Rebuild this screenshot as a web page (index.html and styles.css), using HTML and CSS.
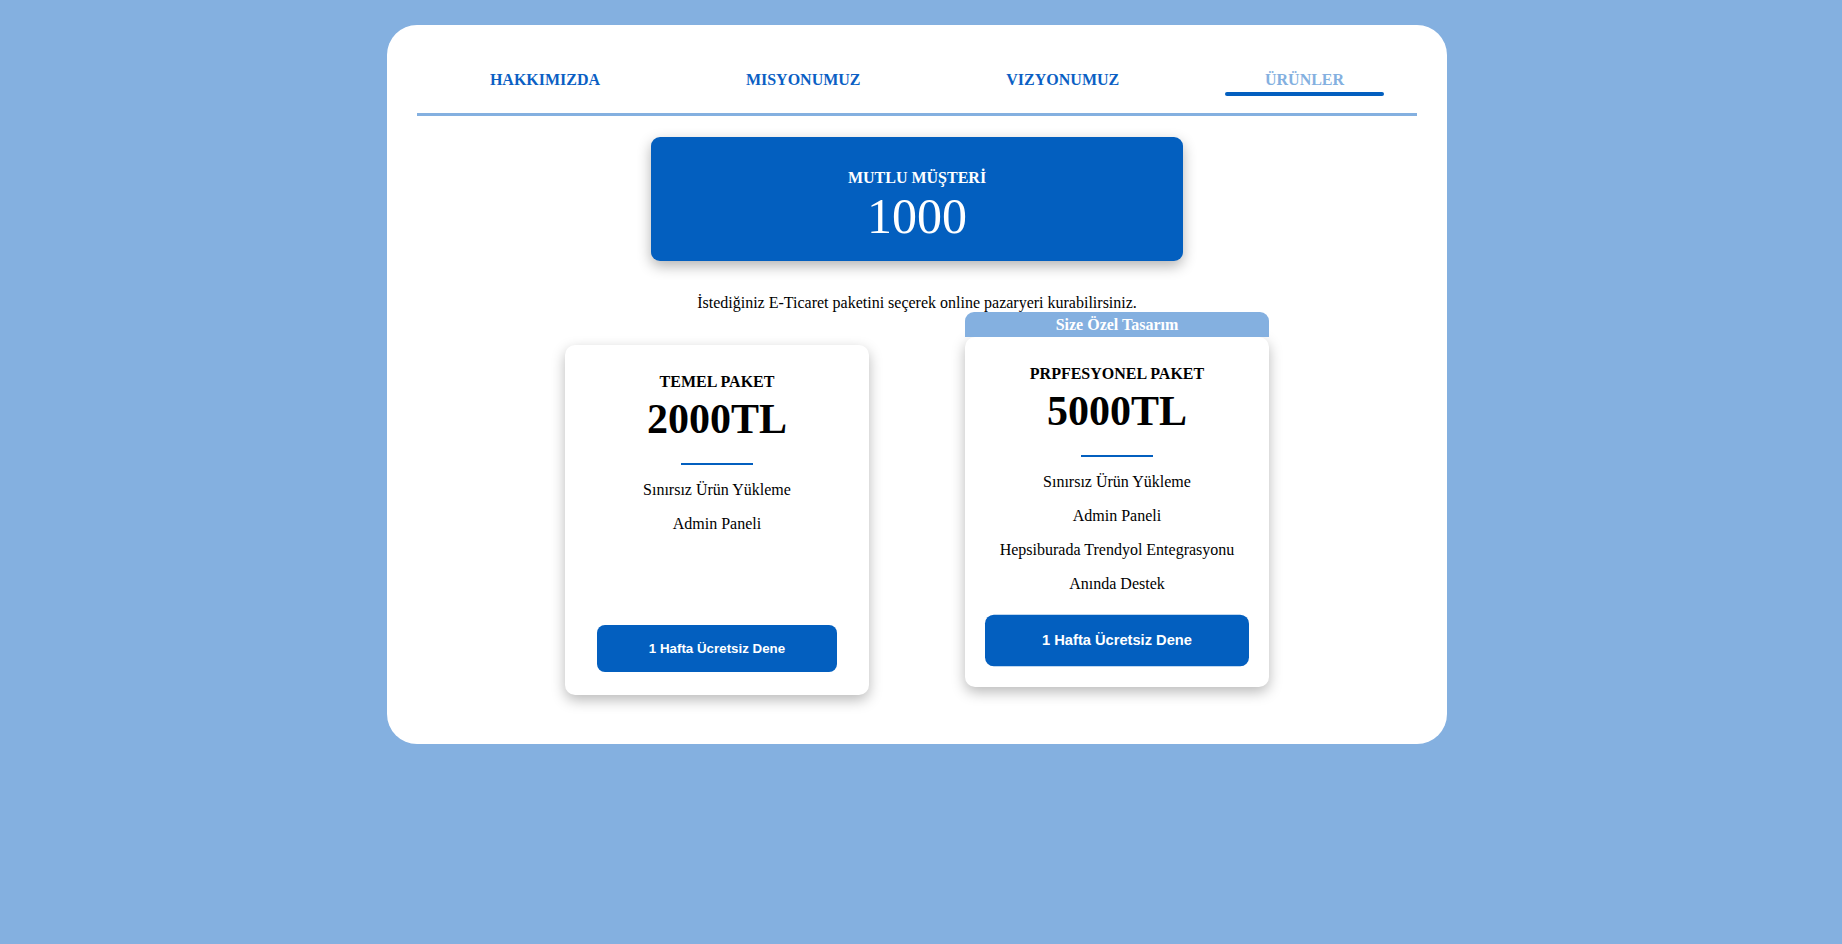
FILE: index.html
```html
<!DOCTYPE html>
<html lang="tr">
<head>
<meta charset="utf-8">
<title>Ürünler</title>
<link rel="stylesheet" href="styles.css">
</head>
<body>
<div class="page">
  <main class="panel">
    <nav class="tabs">
      <ul class="tab-list">
        <li class="tab"><span class="tab-text">HAKKIMIZDA</span></li>
        <li class="tab"><span class="tab-text">MISYONUMUZ</span></li>
        <li class="tab"><span class="tab-text">VIZYONUMUZ</span></li>
        <li class="tab active"><span class="tab-text">ÜRÜNLER</span><span class="tab-bar"></span></li>
      </ul>
    </nav>

    <section class="stat">
      <h3 class="stat-label">MUTLU MÜŞTERİ</h3>
      <div class="stat-value">1000</div>
    </section>

    <p class="intro">İstediğiniz E-Ticaret paketini seçerek online pazaryeri kurabilirsiniz.</p>

    <div class="plans">
      <article class="plan">
        <h4 class="plan-title">TEMEL PAKET</h4>
        <div class="plan-price">2000TL</div>
        <div class="plan-divider"></div>
        <div class="plan-features">
          <p class="feature">Sınırsız Ürün Yükleme</p>
          <p class="feature">Admin Paneli</p>
        </div>
        <button class="plan-btn">1 Hafta Ücretsiz Dene</button>
      </article>

      <article class="plan featured">
        <div class="ribbon">Size Özel Tasarım</div>
        <h4 class="plan-title">PRPFESYONEL PAKET</h4>
        <div class="plan-price">5000TL</div>
        <div class="plan-divider"></div>
        <div class="plan-features">
          <p class="feature">Sınırsız Ürün Yükleme</p>
          <p class="feature">Admin Paneli</p>
          <p class="feature">Hepsiburada Trendyol Entegrasyonu</p>
          <p class="feature">Anında Destek</p>
        </div>
        <button class="plan-btn">1 Hafta Ücretsiz Dene</button>
      </article>
    </div>
  </main>
</div>
</body>
</html>
```

FILE: styles.css
```css
html, body {
  margin: 0;
  padding: 0;
}

body {
  background: #84b0e0;
  font-family: "Liberation Serif", "Times New Roman", serif;
  font-size: 16px;
  color: #000;
  min-height: 944px;
}

.page {
  padding-top: 25px;
}

.panel {
  width: 1060px;
  box-sizing: border-box;
  margin-left: calc(50% - 534px);
  background: #fff;
  border-radius: 30px;
  padding: 0 30px 49px;
}

/* tabs */
.tabs {
  padding-top: 46px;
  padding-bottom: 17px;
  border-bottom: 3px solid #84b0e0;
}

.tab-list {
  list-style: none;
  margin: 0;
  padding: 0;
  display: flex;
  justify-content: space-around;
  align-items: flex-start;
}

.tab {
  padding: 0 40px;
  display: flex;
  flex-direction: column;
  align-items: stretch;
}

.tab-text {
  font-weight: bold;
  font-size: 16px;
  line-height: 18px;
  color: #0b5fc4;
  text-align: center;
}

.tab.active .tab-text {
  color: #84b0e0;
}

.tab-bar {
  display: block;
  height: 4px;
  margin: 3px -40px 0;
  border-radius: 2px;
  background: #035fbf;
}

/* stat */
.stat {
  width: 532px;
  box-sizing: border-box;
  margin: 21px auto 0;
  padding: 32px 0 17px;
  background: #035fbf;
  border-radius: 9px;
  box-shadow: 0 5px 14px rgba(0, 0, 0, 0.3);
  color: #fff;
  text-align: center;
}

.stat-label {
  margin: 0;
  font-size: 16px;
  line-height: 18px;
  font-weight: bold;
}

.stat-value {
  margin-top: 1px;
  font-size: 50px;
  line-height: 56px;
}

.intro {
  margin: 33px 0 33px;
  line-height: 18px;
  text-align: center;
}

/* plans */
.plans {
  display: flex;
  justify-content: center;
  align-items: stretch;
  gap: 96px;
}

.plan {
  position: relative;
  width: 304px;
  box-sizing: border-box;
  padding: 28px 32px 23px;
  background: #fff;
  border-radius: 10px;
  box-shadow: 0 5px 14px rgba(0, 0, 0, 0.28);
  display: flex;
  flex-direction: column;
  align-items: center;
  text-align: center;
}

.plan.featured {
  transform: translateY(-8px);
}

.ribbon {
  position: absolute;
  top: -25px;
  left: 0;
  right: 0;
  height: 25px;
  line-height: 25px;
  background: #84b0e0;
  color: #fff;
  font-weight: bold;
  font-size: 16px;
  border-radius: 9px 9px 0 0;
}

.plan-title {
  margin: 0;
  font-size: 16px;
  line-height: 18px;
  font-weight: bold;
}

.plan-price {
  margin-top: 4px;
  font-size: 42px;
  line-height: 48px;
  font-weight: bold;
}

.plan-divider {
  margin-top: 20px;
  width: 72px;
  height: 2px;
  background: #035fbf;
}

.plan-features {
  margin: 16px 0 24px;
  display: flex;
  flex-direction: column;
  gap: 16px;
}

.feature {
  margin: 0;
  line-height: 18px;
}

.plan-btn {
  margin-top: auto;
  width: 100%;
  height: 47px;
  border: none;
  border-radius: 8px;
  background: #035fbf;
  color: #fff;
  font-family: "Liberation Sans", Arial, sans-serif;
  font-weight: bold;
  font-size: 13.333px;
}

.plan.featured .plan-btn {
  transform: scale(1.1);
}
```
